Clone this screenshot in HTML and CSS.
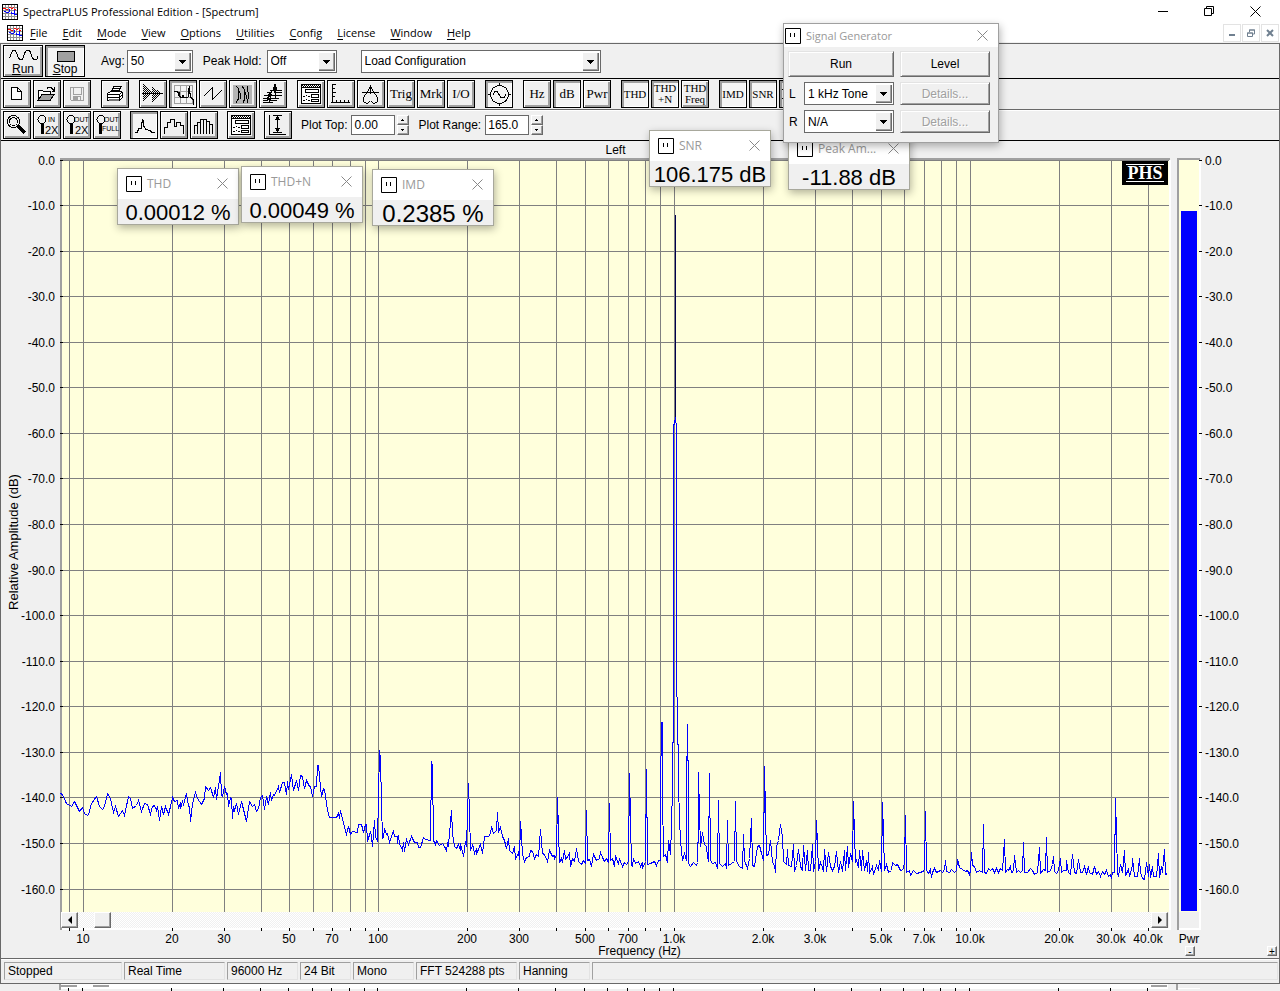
FILE: index.html
```html
<!DOCTYPE html>
<html lang="en">
<head>
<meta charset="utf-8">
<title>SpectraPLUS Professional Edition - [Spectrum]</title>
<link rel="stylesheet" href="styles.css">
</head>
<body>
<svg class="defs" aria-hidden="true">
  <defs>
    <pattern id="dots" width="2" height="2" patternUnits="userSpaceOnUse"><path d="M0 0h1v1h-1zM1 1h1v1h-1z" fill="#000"/></pattern>
    <symbol id="app" viewBox="0 0 16 16">
      <path d="M0 0h16v16H0z" fill="#fff"/>
      <path d="M3.500 0v16M6.500 0v16M9.500 0v16M12.500 0v16M0 3.500h16M0 6.500h16M0 9.500h16M0 12.500h16" stroke="#909090"/>
      <path d="M1 4.500h3M4 5.500h2M7 3.500h2M9 4.500h2M11 3.500h1M12 5.500h2" stroke="#f00" fill="none"/>
      <path d="M2 7.500h2M4 8.500h3M7.500 5v3M9.500 8v2M10 9.500h2M12.500 6v5M13 10.500h2" stroke="#00f" fill="none"/>
      <path d="M.5.5h15v15H.5z" fill="none" stroke="#000"/>
    </symbol>
    <symbol id="meter" viewBox="0 0 16 16">
      <path d="M.5.5h15v15H.5z" fill="#fff" stroke="#000"/>
      <path d="M5.500 5v4M9.500 5v4" stroke="#000"/>
    </symbol>
    <symbol id="close" viewBox="0 0 11 11"><path d="M.5.5l10 10M10.500.5l-10 10" stroke="currentColor" fill="none"/></symbol>
    <symbol id="options" viewBox="0 0 26 26">
      <path d="M3.500 3.500h19v19h-19z" fill="#fff" stroke="#000"/>
      <path d="M4 4h18v2H4z" fill="url(#dots)"/>
      <path d="M3 6.500h20M7.500 8.500h13v3h-13zM13.500 13.500h7v3h-7zM13.500 18.500h7v2h-7z" fill="none" stroke="#000"/>
      <path d="M5 15.500h2M8 14.500h1M10 15.500h2M5 19.500h2M8 18.500h1M10 19.500h2" stroke="#000"/>
    </symbol>
  </defs>
</svg>

<header class="titlebar">
  <svg class="app-icon"><use href="#app"/></svg>
  <h1>SpectraPLUS Professional Edition - [Spectrum]</h1>
  <div class="caption">
    <button aria-label="Minimize"><svg viewBox="0 0 11 11"><path d="M0 5.500h10" stroke="#000"/></svg></button>
    <button aria-label="Restore"><svg viewBox="0 0 11 11"><path d="M.5 2.500h7v7h-7zM2.500 2V.5h7v7H8" fill="none" stroke="#000"/></svg></button>
    <button aria-label="Close"><svg><use href="#close"/></svg></button>
  </div>
</header>

<nav class="menubar">
  <svg class="app-icon"><use href="#app"/></svg>
  <div class="menus">
    <button><u>F</u>ile</button><button><u>E</u>dit</button><button><u>M</u>ode</button><button><u>V</u>iew</button><button><u>O</u>ptions</button><button><u>U</u>tilities</button><button><u>C</u>onfig</button><button><u>L</u>icense</button><button><u>W</u>indow</button><button><u>H</u>elp</button>
  </div>
  <div class="child-caption">
    <button aria-label="Minimize child"><svg viewBox="0 0 8 8"><path d="M1 6h6" stroke="#708090" stroke-width="2"/></svg></button>
    <button aria-label="Restore child"><svg viewBox="0 0 8 8"><path d="M.5 4h5v3.500h-5zM2.500 3V1h5v4H6M0 4h6M2 1h6" fill="none" stroke="#708090"/></svg></button>
    <button aria-label="Close child"><svg viewBox="0 0 8 8"><path d="M1 1l6 6M7 1L1 7" stroke="#708090" stroke-width="2"/></svg></button>
  </div>
</nav>

<main class="workspace">
  <div class="bar main-bar">
    <button class="tool wide"><svg viewBox="0 0 38 16"><path d="M5 12c1 0 1-1 2-4s2-4 3-4 2 1 3 4 2 6 4 6 2-2 3-5 2-5 4-5 2 1 3 4 2 6 4 6 3-2 3-4" fill="none" stroke="#000"/></svg><span><u>R</u>un</span></button>
    <button class="tool wide pressed"><svg viewBox="0 0 38 16"><path d="M11.500 5.500h17v10h-17z" fill="#a0a0a0" stroke="#000"/></svg><span><u>S</u>top</span></button>
    <label class="field avg">Avg: <span class="combo"><select><option>50</option></select></span></label>
    <label class="field hold">Peak Hold: <span class="combo"><select><option>Off</option></select></span></label>
    <span class="combo load"><select aria-label="Load Configuration"><option>Load Configuration</option></select></span>
  </div>

  <div class="bar icon-bar">
    <div class="group">
      <button class="tool" aria-label="New"><svg><path d="M7.500 6.500h6l4 4v8h-10zM13.500 6.500v4h4" fill="#fff" stroke="#000"/></svg></button>
      <button class="tool" aria-label="Open"><svg><path d="M4.500 18.500v-9h4l1 1h7v3" fill="#fff" stroke="#000"/><path d="M4 19.500l4-6h12l-4 6z" fill="#a0a0a0" stroke="#000"/><path d="M13 7.500l1-1h3l3 3M20.500 6v4h-3" fill="none" stroke="#000"/></svg></button>
      <button class="tool" aria-label="Save"><svg><path d="M6.500 6.500h13v13h-12l-1-1zM9.500 6.500v7h8v-7M9.500 19.500v-4h7v4" fill="none" stroke="#a0a0a0"/><path d="M10 16h4v4h-4z" fill="#a0a0a0"/></svg></button>
    </div>
    <div class="group">
      <button class="tool" aria-label="Print"><svg><path d="M9 11.500l3-6h7l-3 6M12 7.500h5M11 9.500h5" fill="#fff" stroke="#000"/><path d="M5.500 12.500l3-2h11l1 1v5l-3 3h-12z" fill="#fff" stroke="#000"/><path d="M5 13.500h12l3-2M5 16.500h12l3-2M17.500 13v6" fill="none" stroke="#000"/><path d="M7 18h10v2H7z" fill="#777"/></svg></button>
    </div>
    <div class="group">
      <button class="tool" aria-label="Time series"><svg><path d="M3 3l9 9v1l-9 8zM12 5l9 7v1l-9 8z" fill="url(#dots)"/><path d="M2 12.500h21" stroke="#000"/></svg></button>
      <button class="tool pressed" aria-label="Spectrum"><svg><path d="M4.500 4.500h18v18h-18zM10.500 4v18M16.500 4v18M4 10.500h18M4 16.500h18" fill="none" stroke="#a0a0a0"/><path d="M4 10.500h3l1 1h1v3l2 2h1l1-2 1 2h4l1-9v-3l1 8 1 4 2 2v5M8.500 12v3M18.500 8v6" fill="none" stroke="#000"/></svg></button>
      <button class="tool" aria-label="Phase"><svg><path d="M3.500 15.500l9-9v12l9-9" fill="none" stroke="#000"/></svg></button>
      <button class="tool" aria-label="Spectrogram"><svg><path d="M3 4h19v19H3z" fill="#b4b4b4"/><path d="M6 5l3 3-1 4 1 5-3 5M12 5l2 3v5l1 4-2 5M18 5l-1 4 2 4-1 5-1 4M8 8l2 4v6M14 9l2 5v4" stroke="#000" fill="none"/></svg></button>
      <button class="tool" aria-label="3-D surface"><svg><path d="M3 21.500h10M3 19.500h4l2-2 2 2h6M3 17.500h4l3-3 1 3h8M4 14.500h4l2-2 2 2h10M7 11.500h4l3-4 1 4h7M10 9.500h3l2-6 2 6h5M15.500 5v12M9 17v4" fill="none" stroke="#000"/></svg></button>
    </div>
    <div class="group">
      <button class="tool" aria-label="Settings"><svg><use href="#options"/></svg></button>
      <button class="tool" aria-label="Scaling"><svg><path d="M4 3.500h4M4 7.500h3M4 11.500h4M4 15.500h3M3 21.500h19M8.500 19v2M12.500 19v2M16.500 19v2M20.500 19v2M4.500 3v19" fill="none" stroke="#000"/></svg></button>
      <button class="tool" aria-label="Calibration"><svg><path d="M4 11.500h17M12.500 4v9M11 9L7 14l-2 4 1 3 2 1h2l2-2M14 9l4 5 2 4-1 3-2 1h-2l-2-2M12.500 5l-3 6M12.500 5l3 6" fill="none" stroke="#000"/></svg></button>
      <button class="tool">Trig</button>
      <button class="tool">Mrk</button>
      <button class="tool">I/O</button>
    </div>
    <div class="group">
      <button class="tool pressed" aria-label="Signal generator"><svg><circle cx="13.500" cy="13.500" r="9" fill="none" stroke="#000"/><path d="M13.500 2v3M13.500 22v3M2 13.500h3M22 13.500h3M7 13.500l2-3h2l4 6h3l2-3" fill="none" stroke="#000"/></svg></button>
    </div>
    <div class="group">
      <button class="tool">Hz</button>
      <button class="tool pressed">dB</button>
      <button class="tool">Pwr</button>
    </div>
    <div class="group">
      <button class="tool pressed caps">THD</button>
      <button class="tool pressed two"><span>THD</span><span>+N</span></button>
      <button class="tool two"><span>THD</span><span>Freq</span></button>
    </div>
    <div class="group">
      <button class="tool pressed caps">IMD</button>
      <button class="tool pressed caps">SNR</button>
      <button class="tool pressed" aria-label="Intermodulation"><svg><path d="M2 8.500h3M2 17.500h3M3.500 8v9" stroke="#000"/></svg></button>
    </div>
  </div>

  <div class="bar zoom-bar">
    <div class="group">
      <button class="tool" aria-label="Zoom"><svg><circle cx="9.500" cy="9.500" r="6" fill="none" stroke="#000"/><circle cx="9.500" cy="9.500" r="4" fill="none" stroke="#000"/><path d="M14 14l7 7" stroke="#000" stroke-width="3"/></svg></button>
      <button class="tool" aria-label="Zoom in 2X"><svg><circle cx="8" cy="7.500" r="4" fill="none" stroke="#000"/><path d="M8.500 12v10" stroke="#000" stroke-width="3"/><text x="14" y="10" class="tiny">IN</text><text x="11" y="22" class="small">2X</text></svg></button>
      <button class="tool" aria-label="Zoom out 2X"><svg><circle cx="7" cy="7.500" r="4" fill="none" stroke="#000"/><path d="M7.500 12v10" stroke="#000" stroke-width="3"/><text x="10" y="10" class="tiny">OUT</text><text x="11" y="22" class="small">2X</text></svg></button>
      <button class="tool" aria-label="Zoom out full"><svg><circle cx="7" cy="7.500" r="4" fill="none" stroke="#000"/><path d="M6.500 12v10" stroke="#000" stroke-width="3"/><text x="10" y="10" class="tiny">OUT</text><text x="8" y="19" class="tiny">FULL</text></svg></button>
    </div>
    <div class="group">
      <button class="tool pressed" aria-label="Line plot"><svg><path d="M4 20.500h2l2-4h2l1-6 1-3 1 7 2 3 4 1 2 2h3" fill="none" stroke="#000"/></svg></button>
      <button class="tool" aria-label="Step plot"><svg><path d="M3.500 22v-7h3v-5h3v-3h4v7h2v-4h4v3h3v9" fill="none" stroke="#000"/></svg></button>
      <button class="tool" aria-label="Bar plot"><svg><path d="M3.500 22v-9h3v9M6.500 13v-3h3v12M9.500 10V7.500h3V22M12.500 7.500h3V22M15.500 9.500h3V22M18.500 12.500h3V22" fill="none" stroke="#000"/></svg></button>
    </div>
    <div class="group">
      <button class="tool" aria-label="Plot options"><svg><use href="#options"/></svg></button>
    </div>
    <div class="group">
      <button class="tool" aria-label="Vertical fit"><svg><path d="M4.500 3v19M4 22.500h17M8 3.500h9M12.500 4v17M8 20.500h9" fill="none" stroke="#000"/><path d="M12.500 4l3 4h-6zM12.500 20l3-4h-6z"/></svg></button>
    </div>
    <label class="field spin">Plot Top: <input type="text" value="0.00"></label>
    <span class="updown"><button aria-label="Plot top up"></button><button aria-label="Plot top down"></button></span>
    <label class="field spin">Plot Range: <input type="text" value="165.0"></label>
    <span class="updown"><button aria-label="Plot range up"></button><button aria-label="Plot range down"></button></span>
  </div>

  <section class="view" aria-label="Spectrum">
    <svg id="chart"></svg>
    <div class="scroll">
      <button class="arrow left" aria-label="Scroll left"></button>
      <button class="thumb" aria-label="Scroll position"></button>
      <button class="arrow right" aria-label="Scroll right"></button>
    </div>
    <div class="logo">PHS</div>
    <div class="steps"><button aria-label="Shrink meter">-</button><button aria-label="Grow meter">+</button></div>
  </section>

  <footer class="status">
    <span class="s1">Stopped</span><span class="s2">Real Time</span><span class="s3">96000 Hz</span><span class="s4">24 Bit</span><span class="s5">Mono</span><span class="s2">FFT 524288 pts</span><span class="s3">Hanning</span><span class="rest"></span>
  </footer>
</main>
<svg id="peek" aria-hidden="true"></svg>

<section class="readout thd"><header><svg><use href="#meter"/></svg><h2>THD</h2><button aria-label="Close THD"><svg><use href="#close"/></svg></button></header><p>0.00012 %</p></section>
<section class="readout thdn"><header><svg><use href="#meter"/></svg><h2>THD+N</h2><button aria-label="Close THD+N"><svg><use href="#close"/></svg></button></header><p>0.00049 %</p></section>
<section class="readout imd"><header><svg><use href="#meter"/></svg><h2>IMD</h2><button aria-label="Close IMD"><svg><use href="#close"/></svg></button></header><p>0.2385 %</p></section>
<section class="readout snr"><header><svg><use href="#meter"/></svg><h2>SNR</h2><button aria-label="Close SNR"><svg><use href="#close"/></svg></button></header><p>106.175 dB</p></section>
<section class="readout peak"><header><svg><use href="#meter"/></svg><h2>Peak Am...</h2><button aria-label="Close Peak Amplitude"><svg><use href="#close"/></svg></button></header><p>-11.88 dB</p></section>

<section class="generator">
  <header><svg><use href="#meter"/></svg><h2>Signal Generator</h2><button aria-label="Close Signal Generator"><svg><use href="#close"/></svg></button></header>
  <div class="controls">
    <button class="push run">Run</button><button class="push side">Level</button>
    <label for="left-tone">L</label><span class="combo"><select id="left-tone"><option>1 kHz Tone</option></select></span><button class="push side" disabled>Details...</button>
    <label for="right-tone">R</label><span class="combo"><select id="right-tone"><option>N/A</option></select></span><button class="push side" disabled>Details...</button>
  </div>
</section>
<script src="chart.js"></script>
</body>
</html>
```
FILE: styles.css
```css
* { box-sizing: border-box; }
html, body { height: 100%; }
body {
  margin: 0;
  display: flex;
  flex-direction: column;
  background: #f0f0f0;
  color: #000;
  font: 12px/16px "Liberation Sans", Arial, sans-serif;
  position: relative;
  overflow: hidden;
}
button, input, select { font: inherit; color: inherit; margin: 0; padding: 0; border-radius: 0; }
h1, h2, p { margin: 0; font-weight: normal; }
svg { display: block; }
.defs { position: absolute; width: 0; height: 0; }
.app-icon { width: 16px; height: 16px; flex: none; shape-rendering: crispEdges; }

.titlebar, .menubar { background: #fff; display: flex; align-items: center; flex: none; font-family: "Open Sans", "Noto Sans", sans-serif; font-size: 11px; }
.titlebar { height: 23px; padding-left: 2px; gap: 5px; }
.titlebar h1 { font-size: 11px; line-height: 16px; flex: 1; }
.caption { display: flex; padding-right: 2px; }
.caption button { width: 46px; height: 20px; border: 0; background: none; display: grid; place-items: center; }
.caption svg { width: 11px; height: 11px; }
.menubar { height: 20px; padding-left: 7px; border-bottom: 1px solid #f0f0f0; }
.menus { display: flex; gap: 15px; padding-left: 7px; flex: 1; }
.menus button { border: 0; background: none; line-height: 16px; }
.menus u { text-underline-offset: 2px; }
.child-caption { display: flex; gap: 1px; padding-right: 1px; }
.child-caption button { width: 18px; height: 18px; border: 1px solid #e3e3e3; background: #fff; display: grid; place-items: center; }
.child-caption svg { width: 8px; height: 8px; }

.workspace { flex: 1; min-height: 0; display: flex; flex-direction: column; border: 1px solid #696969; }
.bar { display: flex; align-items: center; flex: none; padding-left: 2px; }
.main-bar { height: 35px; border-bottom: 1px solid #000; gap: 2px; }
.icon-bar { height: 31px; border-bottom: 1px solid #696969; gap: 10px; }
.zoom-bar { height: 31px; border-bottom: 1px solid #000; box-shadow: inset 0 1px #fff; gap: 9px; }
.group { display: flex; gap: 2px; }

.tool {
  width: 28px; height: 28px;
  border: 1px solid #000;
  background: #f0f0f0;
  box-shadow: inset 1px 1px #fff, inset -2px -2px #a0a0a0;
  font: 13px/24px "Liberation Serif", "Times New Roman", serif;
  white-space: nowrap;
  display: flex; justify-content: center; align-items: center;
  flex: none;
}
.tool > svg { width: 26px; height: 26px; shape-rendering: crispEdges; flex: none; }
.tool.pressed { box-shadow: inset 2px 2px #a0a0a0, inset -1px -1px #fff; background: #f4f4f4; }
.tool.caps { font-size: 11px; }
.tool.two { font-size: 11px; line-height: 11px; flex-direction: column; }
.tool.wide { width: 40px; height: 32px; flex-direction: column; justify-content: flex-start; font: 12px/14px "Liberation Sans", Arial, sans-serif; }
.tool.wide > svg { width: 38px; height: 16px; }
.tiny { font: 7px "Liberation Sans", Arial, sans-serif; }
.small { font: 11px "Liberation Sans", Arial, sans-serif; }

.field { display: flex; align-items: center; gap: 5px; }
.avg { padding-left: 14px; gap: 2px; }
.avg .combo { width: 66px; }
.hold { padding-left: 8px; }
.hold .combo { width: 70px; }
.load { width: 240px; margin-left: 22px; }
.combo { display: grid; grid-template-columns: 1fr 20px; height: 23px; border: 1px solid #696969; background: #fff; }
.combo::before {
  content: "";
  grid-area: 1 / 2;
  margin: 1px 1px 1px 2px;
  background: linear-gradient(#000, #000) center 8px / 7px 1px no-repeat, linear-gradient(#000, #000) center 9px / 5px 1px no-repeat, linear-gradient(#000, #000) center 10px / 3px 1px no-repeat, linear-gradient(#000, #000) center 11px / 1px 1px no-repeat, #f0f0f0;
  box-shadow: inset 1px 1px #fff, inset -1px -1px #696969, inset -2px -2px #a0a0a0;
}
.combo select { grid-area: 1 / 1 / 2 / 3; appearance: none; border: 0; background: none; padding-left: 3px; width: 100%; outline: 0; }
.spin { gap: 4px; margin-right: -7px; }
.spin input { width: 44px; height: 20px; border: 1px solid #696969; background: #fff; padding-left: 2px; outline: 0; }
.updown { display: grid; grid-template-rows: 10px 10px; width: 12px; }
.updown button { border: 1px solid; border-color: #fff #696969 #696969 #fff; background: linear-gradient(#000, #000) 4px 3px / 1px 1px no-repeat, linear-gradient(#000, #000) 3px 4px / 3px 1px no-repeat, #f0f0f0; box-shadow: inset -1px -1px #a0a0a0; }
.updown button + button { background: linear-gradient(#000, #000) 4px 4px / 1px 1px no-repeat, linear-gradient(#000, #000) 3px 3px / 3px 1px no-repeat, #f0f0f0; }

.view { flex: 1; min-height: 0; display: grid; grid-template: 19px 1fr 16px 30px / 60px 1fr 111px; }
#chart { grid-area: 1 / 1 / 5 / 4; width: 100%; height: 100%; min-height: 0; }
.scroll { grid-area: 3 / 2; display: flex; background: repeating-conic-gradient(#fff 0 25%, #f0f0f0 0 50%) 0 0 / 2px 2px; z-index: 1; }
.scroll button, .steps button { border: 1px solid; border-color: #fff #696969 #696969 #fff; box-shadow: inset -1px -1px #a0a0a0; background: #f0f0f0; }
.scroll button { width: 17px; height: 16px; display: grid; place-items: center; }
.thumb { margin-left: 16px; }
.right { margin-left: auto; }
.arrow::before { content: ""; border: 4px solid transparent; border-left-width: 0; border-right: 4px solid #000; }
.right::before { border-left: 4px solid #000; border-right-width: 0; }
.logo { grid-area: 2 / 2; justify-self: end; align-self: start; margin-top: 1px; width: 46px; height: 24px; background: linear-gradient(#fff, #fff) center 3px / 38px 1px no-repeat, linear-gradient(#fff, #fff) center 20px / 38px 1px no-repeat, #000; color: #fff; padding: 4px; font: bold 18px/16px "Liberation Serif", "Times New Roman", serif; text-align: center; z-index: 1; }
.steps { grid-area: 4 / 3; z-index: 1; align-self: end; display: flex; justify-content: space-between; padding: 0 2px 2px 17px; }
.steps button { width: 10px; height: 10px; font-size: 10px; line-height: 7px; }

.status { display: flex; gap: 2px; flex: none; height: 25px; padding: 3px 1px 3px 3px; border-top: 1px solid #696969; box-shadow: inset 0 1px #fff; }
.status span { border: 1px solid; border-color: #a0a0a0 #e3e3e3 #e3e3e3 #a0a0a0; padding-left: 3px; line-height: 16px; white-space: nowrap; flex: none; }
.status .s1 { width: 118px; }
.status .s2 { width: 101px; }
.status .s3 { width: 71px; }
.status .s4 { width: 51px; }
.status .s5 { width: 61px; }
.status .rest { flex: 1; }
#peek { width: 100%; height: 7px; flex: none; }

.plot-bg { fill: #ffffdc; }
.grid { stroke: #808080; fill: none; }
.ticks { stroke: #000; fill: none; }
.trace { stroke: #00f; fill: none; }
.main-peak { stroke: #000050; fill: none; }
.edge { fill: #a0a0a0; }
.light { fill: #fff; }
.level { fill: #00f; }
.axis-title { font-size: 13px; }

.readout, .generator { position: absolute; border: 1px solid #a8a89c; background: #f0f0f0; box-shadow: 1px 3px 8px rgba(0, 0, 0, .3); }
.readout { width: 122px; height: 57px; }
.readout header, .generator header { background: #fff; display: flex; align-items: center; font-family: "Open Sans", "Noto Sans", sans-serif; color: #999; }
.readout header { height: 30px; padding: 0 10px 1px 8px; gap: 5px; }
.readout h2, .generator h2 { font-size: 12px; line-height: 16px; flex: 1; white-space: nowrap; }
.readout header > svg, .generator header > svg { width: 16px; height: 16px; }
.readout header button, .generator header button { border: 0; background: none; color: #888; }
header button svg { width: 11px; height: 11px; }
.readout p { font-size: 22px; line-height: 28px; text-align: center; white-space: nowrap; }
.thd { left: 117px; top: 168px; }
.thdn { left: 241px; top: 166px; }
.imd { left: 372px; top: 169px; }
.imd p { font-size: 24px; }
.snr { left: 649px; top: 130px; }
.peak { left: 788px; top: 133px; }
.generator { left: 783px; top: 23px; width: 216px; height: 120px; border-color: #a0a0a0; }
.generator header { height: 23px; padding: 0 10px 0 1px; gap: 5px; }
.generator h2 { font-size: 11px; }
.controls { display: grid; grid-template-columns: 16px 90px 96px; grid-template-rows: 26px 23px 23px; row-gap: 5px; padding: 4px; align-items: center; }
.controls label { padding-left: 1px; }
.controls .combo { min-width: 0; }
.push { height: 100%; background: #f0f0f0; border: 1px solid; border-color: #e3e3e3 #696969 #696969 #e3e3e3; box-shadow: inset 1px 1px #fff, inset -1px -1px #a0a0a0; }
.push.run { grid-column: 1 / 3; }
.push.side { margin-left: 6px; }
.push:disabled { color: #a0a0a0; text-shadow: 1px 1px #fff; }
```
FILE: chart.js
```js
(function () {
  var NS = 'http://www.w3.org/2000/svg';
  var BASE_W = 1107, BASE_H = 752;

  // Each segment: x and y of its origin, then samples in thirds of a unit.
  var segments = [
    [-62, 580, '180,160 188,163 200,190 214,198 223,184 238,213 246,202 254,220 262,227 266,224 274,190 288,168 298,200 306,208 312,200 322,160 330,175 340,218 347,200 356,230 366,210 372,226 384,168 392,176 398,206 408,196 416,180 424,214 434,190 442,194 452,223 456,200 464,197 468,212 472,198 478,240 484,200 490,222 496,198 504,222 512,200 518,172 524,184 532,180 536,204 540,186 542,205 548,184 550,194 560,160 564,200 568,198 571,244 576,190 586,156 592,174 604,192 612,176 616,140 624,150 632,142 640,172 646,142 650,178 660,97 664,165 668,168 673,138 678,162 682,160 686,200 692,172 694,174 698,234 701,200 704,210 708,190 714,224 724,184 740,243 748,184 756,200 764,194 768,214 774,206 780,172 788,166 793,208 800,168 804,192 810,158 814,180 820,162 824,166 834,140 838,158 846,128 852,128 858,164 863,124 866,148 874,104 880,150 889,122 894,152 900,106 906,110 912,145 920,122 928,140 932,138'],
    [248, 540, '2,260 6,288 12,258 18,258 22,196 26,196 30,262 34,288 40,264 44,268 52,330 58,352 80,352 84,340 88,354 92,332 100,370 108,402 116,378 122,404 128,394 142,396 146,372 154,374 160,396 166,374 168,374 172,424 180,394 184,410 187,438 193,362 197,410 203,424 208,152 210,176 214,310 216,416 220,412 224,386 228,404 232,400 238,428 244,408 250,390 254,408 262,408 262,430 266,406 268,430 276,450 280,428 283,453 290,418 294,432 304,410 312,428 322,428 326,442 332,442 340,412 346,418 360,420 364,184 367,200 371,420 376,432 380,420 388,436 396,430 404,440 408,450 412,430 416,436 424,332 428,400 432,440 438,444 444,434 450,450 452,430 460,470 466,424 470,440 474,250 478,340 480,452 486,436 490,442 494,460 498,444 500,464 508,438 512,434 516,460 524,408 536,410 542,400 544,378 550,400 558,392 562,338 566,394 572,382 578,410 584,420 590,444 595,416 598,450 608,460 613,440 616,478 624,456 628,478 631,364 634,410 638,462 644,484 650,472 658,470 662,450 668,455 672,474 678,464 684,470 690,388 696,460 704,464 712,484 718,452 726,468 732,466 734,478 738,464 742,292 745,390 747,486 754,474 758,486 762,450 766,478 776,466 778,458 782,498 788,474 794,484 800,446 804,484 814,492 820,480 826,490 829,332 833,480 838,478 844,498 850,464 858,480 868,474 870,456 876,472 882,484 888,474 894,486 898,310 902,480 908,474 914,498 916,466 924,492 928,474'],
    [558, 540, '0,484 8,500 14,486 20,492 24,484 28,220 31,360 33,496 36,500 40,475 46,490 56,484 60,498 66,486 68,504 76,484 79,208 83,494 90,490 104,484 108,496 116,480 121,480 122,274 125,68 127,68 128,274 131,470 136,462 142,486 146,420 150,464 154,380 158,262 161,0 161,-820 165,-846 165,-1454 166,-846 170,-820 170,-20 173,0 174,255 178,356 182,420 188,480 194,460 200,482 200,268 202,72 205,280 206,490 210,498 220,486 228,496 232,486 234,370 235,218 238,340 240,440 246,396 252,434 258,440 262,470 264,484 268,220 272,480 276,490 286,486 292,504 295,300 299,490 306,498 316,490 320,504 322,360 326,496 334,490 342,484 346,304 350,484 358,498 366,504 370,404 374,480 382,506 388,476 394,356 398,496 404,498 412,440 418,436 424,460 430,480 433,200 436,340 438,466 446,462 450,420 456,486 464,496 466,518 470,440 474,420 480,374 486,410 490,484 498,492 502,448 506,496 514,500 520,434 524,514 530,496 536,448 540,498 546,512 550,436 556,512 562,452 566,512 572,510 577,434 580,514 586,484 590,362 594,512 600,488 606,502 610,514 613,448 618,514 626,458 632,500 638,512 644,498 649,454 654,516 662,484 666,514 672,452 676,512 682,440 686,502 692,460 696,484 700,304 703,402 705,486 710,480 714,502 718,452 724,510 728,452 734,510 740,480 742,514 745,456 748,520 756,500 760,522 768,496 776,512 778,480 784,514 787,308 790,404 792,510 798,494 806,516 814,510 818,488 826,496 832,494 840,510 850,508 853,480 856,346 860,516 868,510 872,526 880,510 890,520 900,516 912,512 916,334 920,512 926,520'],
    [868, 580, '0,388 4,412 8,396 14,386 20,398 26,394 30,390 36,396 42,388 46,362 50,394 58,398 64,388 74,396 80,390 83,358 88,382 96,388 106,394 112,392 118,402 121,390 124,336 128,376 134,380 140,396 148,392 156,396 160,252 164,396 168,400 174,386 180,390 188,384 192,396 198,384 206,396 212,384 218,392 223,298 227,398 232,388 236,392 240,380 244,398 250,394 254,346 258,396 266,390 272,396 276,390 280,308 284,396 292,398 300,386 306,390 314,402 322,396 328,322 332,400 340,388 345,392 349,292 353,396 360,392 366,374 370,348 374,394 380,400 386,390 391,356 394,396 400,392 408,390 410,360 414,398 422,402 428,342 432,396 438,400 446,358 450,398 458,396 462,380 468,404 474,380 478,396 486,402 493,380 498,404 506,394 512,408 518,394 524,404 530,390 534,410 540,404 544,414 548,396 554,396 556,176 559,280 561,396 564,408 572,374 578,396 583,332 587,406 594,388 598,410 606,376 608,354 612,410 622,410 628,356 632,396 636,414 642,418 650,366 654,410 658,372 662,412 667,380 671,410 680,410 685,340 689,412 694,380 698,396 703,328 707,402 711,400']
  ];

  function add(svg, name, attrs, text) {
    var el = document.createElementNS(NS, name);
    for (var k in attrs) el.setAttribute(k, attrs[k]);
    if (text !== undefined) el.textContent = text;
    svg.appendChild(el);
    return el;
  }
  function rect(svg, cls, x, y, w, h) {
    add(svg, 'rect', { 'class': cls, x: x, y: y, width: w, height: h });
  }
  function label(svg, x, y, anchor, text) {
    return add(svg, 'text', { x: x, y: y, 'text-anchor': anchor }, text);
  }
  function freqX(f, left, width) {
    return Math.floor(left + width * (21 + 295.700 * (Math.log(f / 10) / Math.LN10)) / BASE_W) + 0.5;
  }
  var freqs = [9];
  [10, 100, 1000].forEach(function (d) { for (var i = 1; i < 10; i++) freqs.push(i * d); });
  freqs.push(10000, 20000, 30000, 40000);

  function draw() {
    var svg = document.getElementById('chart');
    svg.textContent = '';
    var W = svg.clientWidth, H = svg.clientHeight;
    var L = 61, R = W - 110, T = 19, B = H - 46, w = R - L, h = B - T, foot = H - 30;
    rect(svg, 'plot-bg', L, T, w, h);
    rect(svg, 'edge', L - 2, T - 2, w + 3, 2);
    rect(svg, 'edge', L - 2, T - 2, 2, foot - T + 4);
    rect(svg, 'light', R, T, 2, foot - T + 2);
    rect(svg, 'light', L, foot, w + 2, 2);

    var mL = R + 10;
    rect(svg, 'plot-bg', mL, T, 21, h);
    rect(svg, 'edge', mL - 2, T - 2, 23, 2);
    rect(svg, 'edge', mL - 2, T - 2, 2, foot - T + 4);
    rect(svg, 'light', mL + 20, T, 2, foot - T + 2);
    rect(svg, 'light', mL, foot, 22, 2);
    rect(svg, 'level', mL + 2, Math.round(T + h * 51 / BASE_H), 16, Math.round(h * 700 / BASE_H));

    var grid = '', ticks = '';
    for (var i = 0; i <= 16; i++) {
      var y = Math.floor(T + h * i * 45.570 / BASE_H) + 0.5;
      var text = (i ? '-' + i * 10 : '0') + '.0';
      grid += 'M' + L + ' ' + y + 'H' + R;
      ticks += 'M' + (L - 2) + ' ' + y + 'h3M' + (mL + 20) + ' ' + y + 'h3';
      label(svg, L - 7, y + 4, 'end', text);
      label(svg, mL + 26, y + 4, 'start', text);
    }
    freqs.forEach(function (f) {
      var x = freqX(f, L, w);
      grid += 'M' + x + ' ' + T + 'V' + B;
      ticks += 'M' + x + ' ' + foot + 'v3';
      if ([1, 2, 3, 5, 7].indexOf(+String(f)[0]) >= 0 || f === 40000) {
        label(svg, x - 0.5, foot + 15, 'middle', f < 1000 ? f : (f / 1000).toFixed(1) + 'k');
      }
    });
    add(svg, 'path', { 'class': 'grid', d: grid, 'shape-rendering': 'crispEdges' });
    add(svg, 'path', { 'class': 'ticks', d: ticks, 'shape-rendering': 'crispEdges' });

    var pts = [];
    segments.forEach(function (s) {
      s[2].split(' ').forEach(function (p) {
        var c = p.split(',');
        var px = Math.floor((s[0] + c[0] / 3) * w / BASE_W + L) + 0.5;
        var py = Math.floor((s[1] + c[1] / 3) * h / BASE_H + T) + 0.5;
        pts.push(px + ',' + py);
      });
    });
    add(svg, 'polyline', { 'class': 'trace', points: pts.join(' '), 'shape-rendering': 'crispEdges' });
    var cx = Math.floor(613 * w / BASE_W + L) + 0.5;
    add(svg, 'path', { 'class': 'main-peak', d: 'M' + cx + ' ' + (T + h * 55 / BASE_H) + 'V' + (T + h * 257 / BASE_H), 'shape-rendering': 'crispEdges' });

    label(svg, L + w / 2, 13, 'middle', 'Left');
    label(svg, L + w / 2 + 24, foot + 27, 'middle', 'Frequency (Hz)');
    label(svg, mL + 10, foot + 15, 'middle', 'Pwr');
    add(svg, 'text', { 'class': 'axis-title', 'text-anchor': 'middle', transform: 'translate(17 ' + (T + h * 382 / BASE_H) + ') rotate(-90)' }, 'Relative Amplitude (dB)');

    var peek = document.getElementById('peek');
    peek.textContent = '';
    rect(peek, 'light', L, 0, w, 5);
    rect(peek, 'edge', L - 2, 0, 2, 6);
    rect(peek, 'edge', L, 1, 16, 2);
    rect(peek, 'edge', L + 32, 1, 16, 2);
    rect(peek, 'edge', R - 17, 1, 16, 2);
    rect(peek, 'edge', mL - 2, 0, 2, 6);
    rect(peek, 'light', mL, 4, 22, 1);
    var d = '';
    freqs.forEach(function (f) { d += 'M' + freqX(f, L, w) + ' 4v3'; });
    add(peek, 'path', { 'class': 'ticks', d: d, 'shape-rendering': 'crispEdges' });
  }
  draw();
  window.addEventListener('resize', draw);
})();
```
